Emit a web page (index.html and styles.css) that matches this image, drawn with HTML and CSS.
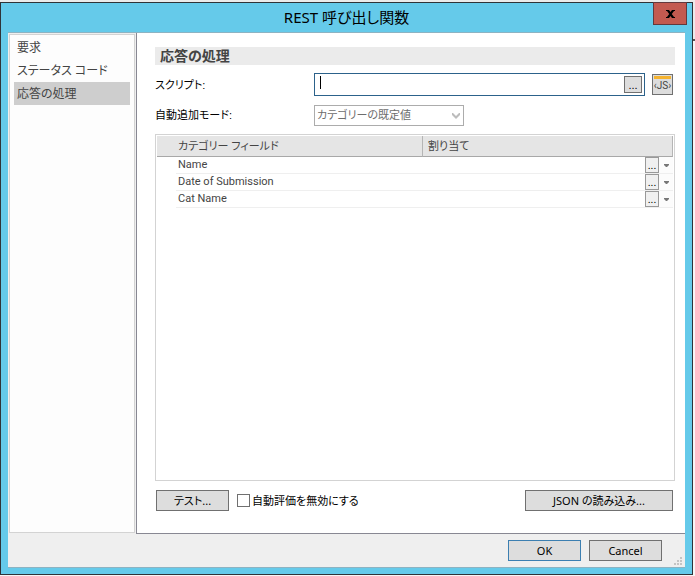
FILE: index.html
```html
<!DOCTYPE html>
<html lang="ja">
<head>
    <meta charset="UTF-8">
    <meta name="viewport" content="width=device-width, initial-scale=1.0">
    <title>REST 呼び出し関数</title>
    <link rel="stylesheet" href="styles.css">
</head>
<body>

<div class="window">
    <header class="title-bar">
        <h1 class="title">REST 呼び出し関数</h1>
        <button type="button" class="close-button" aria-label="閉じる">
            <svg width="9" height="8" viewBox="0 0 9 8"><path d="M0 0h3l1.500 2L6 0h3v1H8L5.800 4 8 7h1v1H6L4.500 6 3 8H0V7h1l2.200-3L1 1H0z"/></svg>
        </button>
    </header>

    <div class="client">
        <div class="content">
            <nav class="sidebar">
                <a href="#" class="nav-item">要求</a>
                <a href="#" class="nav-item">ステータス コード</a>
                <a href="#" class="nav-item active">応答の処理</a>
            </nav>

            <main class="panel">
                <h2 class="section-title">応答の処理</h2>

                <div class="form-row script-row">
                    <label for="script">スクリプト:</label>
                    <div class="script-box">
                        <span class="caret"></span>
                        <input type="text" id="script">
                        <button type="button" class="browse-button">...</button>
                    </div>
                    <button type="button" class="js-button"><span>‹JS›</span></button>
                </div>

                <div class="form-row">
                    <label for="mode">自動追加モード:</label>
                    <div class="select-box">
                        <select id="mode" disabled>
                            <option>カテゴリーの既定値</option>
                        </select>
                        <svg class="chevron" width="8" height="6" viewBox="0 0 8 6"><path d="M0 0h1l3 3 3-3h1v2L4 6 0 2z"/></svg>
                    </div>
                </div>

                <div class="grid">
                    <table>
                        <thead>
                            <tr>
                                <th class="indent"></th>
                                <th class="field">カテゴリー フィールド</th>
                                <th class="assign">割り当て</th>
                                <th class="tools"></th>
                            </tr>
                        </thead>
                        <tbody>
                            <tr>
                                <td class="indent"></td>
                                <td>Name</td>
                                <td></td>
                                <td class="tools"><div><button type="button" class="cell-button">...</button><button type="button" class="drop-button" aria-label="選択"><svg width="5" height="3" viewBox="0 0 5 3"><path d="M0 0h5v1L3 3H2L0 1z"/></svg></button></div></td>
                            </tr>
                            <tr>
                                <td class="indent"></td>
                                <td>Date of Submission</td>
                                <td></td>
                                <td class="tools"><div><button type="button" class="cell-button">...</button><button type="button" class="drop-button" aria-label="選択"><svg width="5" height="3" viewBox="0 0 5 3"><path d="M0 0h5v1L3 3H2L0 1z"/></svg></button></div></td>
                            </tr>
                            <tr>
                                <td class="indent"></td>
                                <td>Cat Name</td>
                                <td></td>
                                <td class="tools"><div><button type="button" class="cell-button">...</button><button type="button" class="drop-button" aria-label="選択"><svg width="5" height="3" viewBox="0 0 5 3"><path d="M0 0h5v1L3 3H2L0 1z"/></svg></button></div></td>
                            </tr>
                        </tbody>
                    </table>
                </div>

                <div class="actions">
                    <button type="button" class="button">テスト...</button>
                    <input type="checkbox" id="disableEval">
                    <label for="disableEval">自動評価を無効にする</label>
                    <button type="button" class="button load-button">JSON の読み込み...</button>
                </div>
            </main>
        </div>

        <footer class="footer">
            <button type="button" class="button ok-button">OK</button>
            <button type="button" class="button">Cancel</button>
            <svg class="grip" width="8" height="8" viewBox="0 0 8 8"><path d="M6 0h2v2H6zM3 3h2v2H3zM6 3h2v2H6zM0 6h2v2H0zM3 6h2v2H3zM6 6h2v2H6z"/></svg>
        </footer>
    </div>
</div>

</body>
</html>
```
FILE: styles.css
```css
* {
    box-sizing: border-box;
}

body {
    margin: 0;
    padding: 2px 2px 1px 0;
    min-height: 100vh;
    display: flex;
    background: linear-gradient(#ebebeb 39px, #555 39px, #555 41px, #f6f6f6 41px);
    font-family: "Liberation Sans", "Noto Sans CJK JP", sans-serif;
    font-size: 11px;
    line-height: 16px;
    font-feature-settings: "palt";
    color: #000;
}

button, input, select {
    font: inherit;
    font-feature-settings: inherit;
    color: inherit;
    margin: 0;
    padding: 0;
}

svg {
    display: block;
}

.window {
    flex: 1;
    display: flex;
    flex-direction: column;
    padding: 0 7px 6px;
    background-color: #65caea;
    border: 1px solid #2f3338;
}

/* Title bar */
.title-bar {
    position: relative;
    height: 29px;
}

.title {
    margin: 0;
    padding-top: 3px;
    font-family: "Noto Sans", "Noto Sans CJK JP", sans-serif;
    font-size: 15px;
    font-weight: normal;
    line-height: 22px;
    text-align: center;
}

.close-button {
    position: absolute;
    top: -1px;
    right: -2px;
    width: 34px;
    height: 23px;
    display: flex;
    justify-content: center;
    align-items: center;
    background-color: #c35a50;
    border: 1px solid #63393d;
}

.client {
    flex: 1;
    display: flex;
    flex-direction: column;
    background-color: #efefef;
    border-top: 1px solid #8db3c2;
    border-bottom: 1px solid #8db3c2;
}

.content {
    flex: 1;
    display: flex;
}

/* Left navigation */
.sidebar {
    width: 126px;
    margin: 1px;
    padding: 1px 4px;
    background-color: #fdfdfd;
    border: 1px solid #d3d3d3;
}

.nav-item {
    display: block;
    padding: 0 3px;
    font-family: "Noto Sans", "Noto Sans CJK JP", sans-serif;
    font-size: 12px;
    line-height: 23px;
    color: #444;
    text-decoration: none;
    white-space: nowrap;
}

.nav-item.active {
    background-color: #cecece;
}

/* Main panel */
.panel {
    flex: 1;
    display: flex;
    flex-direction: column;
    padding: 14px 10px 22px 18px;
    background-color: #fff;
    border-left: 1px solid #888893;
    border-bottom: 1px solid #888893;
}

.section-title {
    margin: 0 0 8px;
    padding-left: 5px;
    background-color: #ebebeb;
    color: #444;
    font-size: 14px;
    line-height: 18px;
}

.form-row {
    display: flex;
    align-items: center;
    height: 22px;
}

.form-row label {
    width: 159px;
}

.script-row {
    height: 23px;
    margin-bottom: 8px;
}

.script-box {
    flex: 1;
    display: flex;
    align-items: center;
    height: 23px;
    margin-right: 7px;
    padding: 2px;
    border: 1px solid #2c628b;
}

.caret {
    align-self: flex-start;
    width: 1px;
    height: 13px;
    margin-left: 3px;
    background-color: #000;
}

.script-box input {
    flex: 1;
    min-width: 0;
    border: none;
    outline: none;
    background: none;
}

.browse-button {
    width: 18px;
    height: 17px;
    line-height: 12px;
    background-color: #ddd;
    border: 1px solid #707070;
}

.js-button {
    width: 21px;
    height: 21px;
    margin-right: 2px;
    padding: 1px;
    background-color: #ddd;
    border: 1px solid #707070;
    font-family: Roboto, sans-serif;
    font-size: 10px;
    line-height: 13px;
    color: #444;
}

.js-button span {
    display: flex;
    justify-content: center;
    height: 17px;
    border-top: 3px solid #f5b32f;
}

.select-box {
    position: relative;
    width: 150px;
}

.select-box select {
    display: block;
    width: 100%;
    height: 21px;
    padding-left: 2px;
    appearance: none;
    background-color: #fff;
    border: 1px solid #acacac;
    border-radius: 0;
    color: #6d6d6d;
    opacity: 1;
}

.chevron {
    position: absolute;
    top: 8px;
    right: 4px;
    fill: #bcbcbc;
}

/* Category grid */
.grid {
    flex: 1;
    margin-top: 8px;
    padding: 1px;
    border: 1px solid #d3d3d3;
}

table {
    width: 100%;
    table-layout: fixed;
    border-collapse: separate;
    border-spacing: 0;
    color: #444;
}

th {
    height: 21px;
    padding: 0 0 0 5px;
    background-color: #e5e5e5;
    border-bottom: 1px solid #a8a8a8;
    font-weight: normal;
    text-align: left;
}

td {
    height: 17px;
    padding: 0 0 0 2px;
    border-bottom: 1px solid #efefef;
    font-family: Roboto, sans-serif;
    line-height: 16px;
}

.indent {
    width: 19px;
    padding: 0;
}

td.indent {
    border-bottom: none;
}

.field {
    width: 247px;
    padding-left: 2px;
    border-right: 1px solid #b5b5b5;
}

.tools {
    width: 28px;
    padding: 0;
}

th.tools {
    border-right: 1px solid #b5b5b5;
}

.tools div {
    display: flex;
    height: 16px;
}

.cell-button {
    width: 14px;
    height: 16px;
    background-color: #f0f0f0;
    border: 1px solid #999;
    color: #000;
}

.drop-button {
    flex: 1;
    display: flex;
    justify-content: center;
    align-items: center;
    background-color: #fcfcfc;
    border: none;
    fill: #777;
}

/* Buttons */
.actions {
    display: flex;
    align-items: center;
    margin-top: 9px;
    padding: 0 2px 0 1px;
}

.button {
    width: 73px;
    height: 21px;
    background-color: #ddd;
    border: 1px solid #707070;
    font-family: "Noto Sans", "Noto Sans CJK JP", sans-serif;
    font-size: 11px;
    line-height: 16px;
    white-space: nowrap;
}

.actions input {
    appearance: none;
    width: 13px;
    height: 13px;
    margin: 0 2px 0 8px;
    background-color: #fff;
    border: 1px solid #707070;
}

.actions .load-button {
    width: 148px;
    margin-left: auto;
}

.footer {
    position: relative;
    display: flex;
    justify-content: flex-end;
    gap: 8px;
    padding: 6px 23px 6px 0;
}

.ok-button {
    border-color: #3c7fb1;
}

.grip {
    position: absolute;
    right: 3px;
    bottom: 2px;
    fill: #c4c4c4;
}
```
